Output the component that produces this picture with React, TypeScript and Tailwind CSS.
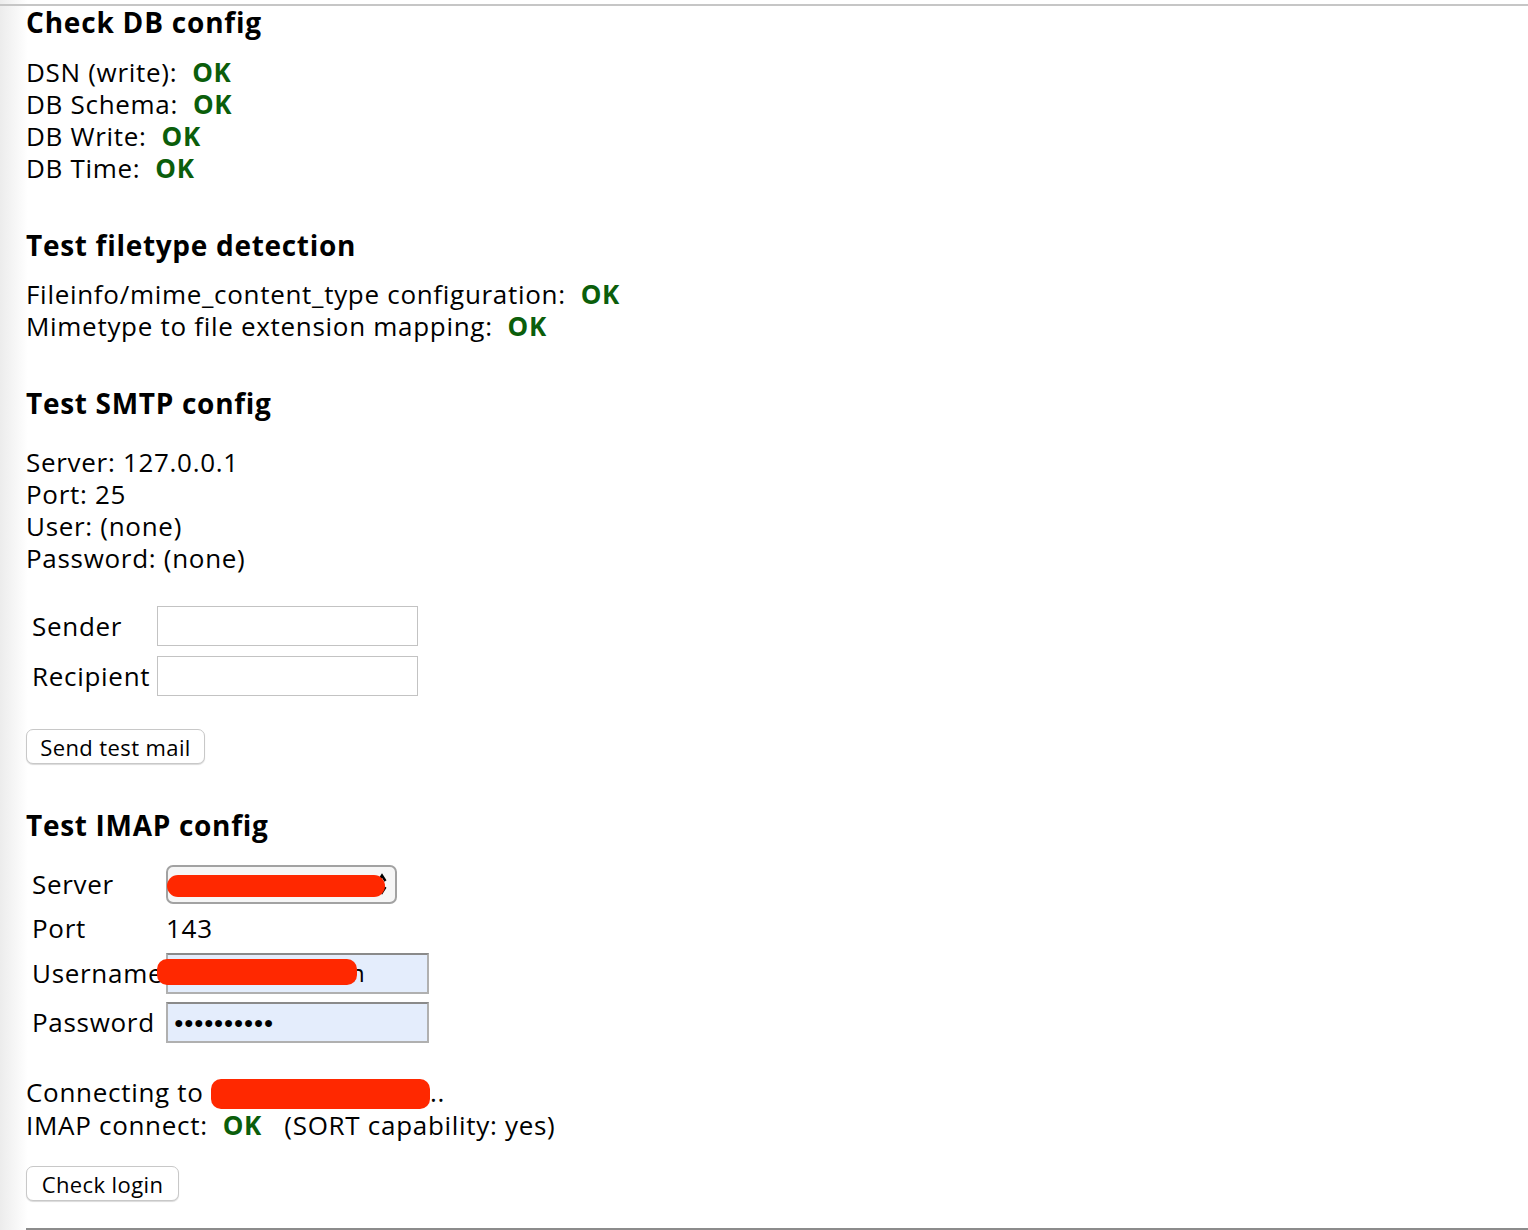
import React from "react";

const font = { fontFamily: '"Open Sans", "Noto Sans", sans-serif' };

function Ok() {
  return <span className="font-bold text-[#0b5e0b]">OK</span>;
}

function Redact({ className }: { className: string }) {
  return <div className={"absolute rounded-[10px] bg-[#ff2800] " + className} />;
}

export default function App() {
  return (
    <div
      className="min-h-[1230px] w-full bg-[linear-gradient(to_right,#ececec,#ffffff_28px)] pt-[4px] text-black"
      style={font}
    >
      <div className="h-[2px] bg-[#c6c6c6]" />

      <div className="pl-[26px] text-[26px] leading-[32px] tracking-[0.7px]">
        {/* DB */}
        <h2 className="text-[28px] font-bold leading-[32px] tracking-[0.8px]">Check DB config</h2>
        <div className="mt-[18px]">
          <div>DSN (write):&nbsp; <Ok /></div>
          <div>DB Schema:&nbsp; <Ok /></div>
          <div>DB Write:&nbsp; <Ok /></div>
          <div>DB Time:&nbsp; <Ok /></div>
        </div>

        {/* filetype */}
        <h2 className="mt-[45px] text-[28px] font-bold leading-[32px] tracking-[0.7px]">Test filetype detection</h2>
        <div className="mt-[17px]">
          <div>Fileinfo/mime_content_type configuration:&nbsp; <Ok /></div>
          <div>Mimetype to file extension mapping:&nbsp; <Ok /></div>
        </div>

        {/* SMTP */}
        <h2 className="mt-[45px] text-[28px] font-bold leading-[32px] tracking-[0.7px]">Test SMTP config</h2>
        <div className="mt-[27px]">
          <div>Server: 127.0.0.1</div>
          <div>Port: 25</div>
          <div>User: (none)</div>
          <div>Password: (none)</div>
        </div>

        <div className="mt-[32px] flex flex-col gap-[10px]">
          <div className="flex items-center">
            <span className="w-[131px] pl-[6px]">Sender</span>
            <div className="h-[40px] w-[261px] border border-[#c3c3c3] bg-white" />
          </div>
          <div className="flex items-center">
            <span className="w-[131px] pl-[6px]">Recipient</span>
            <div className="h-[40px] w-[261px] border border-[#c3c3c3] bg-white" />
          </div>
        </div>

        <button className="mt-[33px] flex h-[35px] w-[179px] items-center justify-center rounded-[7px] border border-[#c8c8c8] bg-white text-[22px] leading-none tracking-[0.4px] shadow-[0_1px_1px_rgba(0,0,0,0.15)]">
          Send test mail
        </button>

        {/* IMAP */}
        <h2 className="mt-[45px] text-[28px] font-bold leading-[32px] tracking-[0.7px]">Test IMAP config</h2>
        <div className="relative mt-[21px] flex flex-col">
          <div className="flex h-[44px] items-center">
            <span className="w-[140px] pl-[6px]">Server</span>
            <div className="flex h-[39px] w-[231px] items-center justify-end rounded-[7px] border-2 border-[#a2a2a2] bg-[#f6f6f6] pr-[8px]">
              <svg width="10" height="24" viewBox="0 0 10 24">
                <path d="M1.5 9 L5 3.5 L8.5 9" fill="none" stroke="#000" strokeWidth="2.4" />
                <path d="M1.5 15 L5 20.5 L8.5 15" fill="none" stroke="#000" strokeWidth="2.4" />
              </svg>
            </div>
          </div>
          <div className="flex h-[44px] items-center">
            <span className="w-[140px] pl-[6px]">Port</span>
            <span>143</span>
          </div>
          <div className="flex h-[46px] items-center">
            <span className="w-[140px] pl-[6px]">Username</span>
            <div className="flex h-[41px] w-[263px] items-center border-2 border-[#b0b0b0] border-t-[#8a8a8a] bg-[#e4edfc] pl-[182px] text-[24px]">
              n
            </div>
          </div>
          <div className="flex h-[52px] items-center">
            <span className="w-[140px] pl-[6px]">Password</span>
            <div className="flex h-[41px] w-[263px] items-center border-2 border-[#b0b0b0] border-t-[#8a8a8a] bg-[#e4edfc] pl-[6px] text-[16px] tracking-[0.3px]">
              ●●●●●●●●●●
            </div>
          </div>
          <Redact className="left-[141px] top-[13px] h-[22px] w-[218px] rounded-[11px]" />
          <Redact className="left-[131px] top-[97px] h-[26px] w-[200px]" />
        </div>

        <div className="mt-[28px]">
          <div>
            Connecting to{" "}
            <span className="inline-block h-[30px] w-[219px] rounded-[10px] bg-[#ff2800] align-[-7px]" />..
          </div>
          <div>IMAP connect:&nbsp; <Ok />&nbsp;&nbsp; (SORT capability: yes)</div>
        </div>

        <button className="mt-[25px] flex h-[35px] w-[153px] items-center justify-center rounded-[7px] border border-[#c8c8c8] bg-white text-[22px] leading-none tracking-[0.4px] shadow-[0_1px_1px_rgba(0,0,0,0.15)]">
          Check login
        </button>

        <div className="mt-[27px] h-[2px] bg-[#8c8c8c]" />
      </div>
    </div>
  );
}
